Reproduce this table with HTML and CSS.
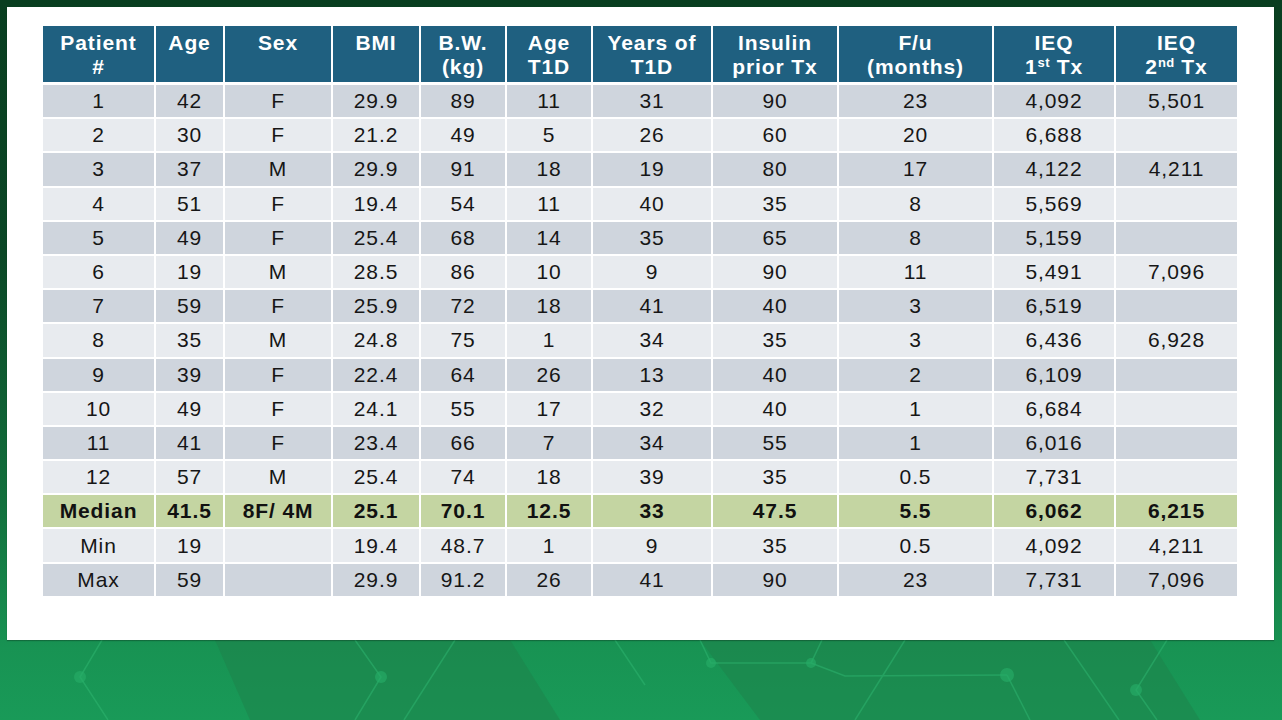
FILE: index.html
```html
<!DOCTYPE html>
<html lang="en">
<head>
<meta charset="utf-8">
<title>Patient table</title>
<link rel="stylesheet" href="styles.css">
</head>
<body>
<svg class="deco" width="1282" height="80" viewBox="0 640 1282 80" aria-hidden="true">
  <polygon class="band" points="215,640 510,640 560,720 250,720"/>
  <polygon class="band" points="700,640 1150,640 1200,720 760,720"/>
  <g class="net">
    <polyline points="102,640 80,677 108,720"/>
    <polyline points="355,640 381,677 355,720"/>
    <line x1="455" y1="640" x2="404" y2="720"/>
    <line x1="615" y1="640" x2="645" y2="685"/>
    <polyline points="700,640 711,663 811,663 822,640"/>
    <polyline points="811,663 845,676 1007,675"/>
    <line x1="905" y1="640" x2="855" y2="720"/>
    <line x1="1007" y1="675" x2="1030" y2="720"/>
    <line x1="1064" y1="640" x2="1119" y2="720"/>
    <polyline points="1167,640 1136,690 1157,720"/>
  </g>
  <g class="dots">
    <circle cx="80" cy="677" r="6"/>
    <circle cx="381" cy="677" r="6"/>
    <circle cx="711" cy="663" r="5"/>
    <circle cx="811" cy="663" r="5"/>
    <circle cx="1007" cy="675" r="7"/>
    <circle cx="1136" cy="690" r="6"/>
  </g>
</svg>
<main class="panel">
  <table class="data">
    <colgroup>
      <col style="width:113px"><col style="width:69px"><col style="width:108px"><col style="width:88px"><col style="width:86px"><col style="width:86px"><col style="width:120px"><col style="width:126px"><col style="width:155px"><col style="width:122px"><col style="width:123px">
    </colgroup>
    <thead>
      <tr>
        <th>Patient<br>#</th>
        <th>Age</th>
        <th>Sex</th>
        <th>BMI</th>
        <th>B.W.<br>(kg)</th>
        <th>Age<br>T1D</th>
        <th>Years of<br>T1D</th>
        <th>Insulin<br>prior Tx</th>
        <th>F/u<br>(months)</th>
        <th>IEQ<br>1<sup>st</sup> Tx</th>
        <th>IEQ<br>2<sup>nd</sup> Tx</th>
      </tr>
    </thead>
    <tbody>
      <tr class="odd"><td>1</td><td>42</td><td>F</td><td>29.9</td><td>89</td><td>11</td><td>31</td><td>90</td><td>23</td><td>4,092</td><td>5,501</td></tr>
      <tr class="even"><td>2</td><td>30</td><td>F</td><td>21.2</td><td>49</td><td>5</td><td>26</td><td>60</td><td>20</td><td>6,688</td><td></td></tr>
      <tr class="odd"><td>3</td><td>37</td><td>M</td><td>29.9</td><td>91</td><td>18</td><td>19</td><td>80</td><td>17</td><td>4,122</td><td>4,211</td></tr>
      <tr class="even"><td>4</td><td>51</td><td>F</td><td>19.4</td><td>54</td><td>11</td><td>40</td><td>35</td><td>8</td><td>5,569</td><td></td></tr>
      <tr class="odd"><td>5</td><td>49</td><td>F</td><td>25.4</td><td>68</td><td>14</td><td>35</td><td>65</td><td>8</td><td>5,159</td><td></td></tr>
      <tr class="even"><td>6</td><td>19</td><td>M</td><td>28.5</td><td>86</td><td>10</td><td>9</td><td>90</td><td>11</td><td>5,491</td><td>7,096</td></tr>
      <tr class="odd"><td>7</td><td>59</td><td>F</td><td>25.9</td><td>72</td><td>18</td><td>41</td><td>40</td><td>3</td><td>6,519</td><td></td></tr>
      <tr class="even"><td>8</td><td>35</td><td>M</td><td>24.8</td><td>75</td><td>1</td><td>34</td><td>35</td><td>3</td><td>6,436</td><td>6,928</td></tr>
      <tr class="odd"><td>9</td><td>39</td><td>F</td><td>22.4</td><td>64</td><td>26</td><td>13</td><td>40</td><td>2</td><td>6,109</td><td></td></tr>
      <tr class="even"><td>10</td><td>49</td><td>F</td><td>24.1</td><td>55</td><td>17</td><td>32</td><td>40</td><td>1</td><td>6,684</td><td></td></tr>
      <tr class="odd"><td>11</td><td>41</td><td>F</td><td>23.4</td><td>66</td><td>7</td><td>34</td><td>55</td><td>1</td><td>6,016</td><td></td></tr>
      <tr class="even"><td>12</td><td>57</td><td>M</td><td>25.4</td><td>74</td><td>18</td><td>39</td><td>35</td><td>0.5</td><td>7,731</td><td></td></tr>
      <tr class="median"><td>Median</td><td>41.5</td><td>8F/ 4M</td><td>25.1</td><td>70.1</td><td>12.5</td><td>33</td><td>47.5</td><td>5.5</td><td>6,062</td><td>6,215</td></tr>
      <tr class="even"><td>Min</td><td>19</td><td></td><td>19.4</td><td>48.7</td><td>1</td><td>9</td><td>35</td><td>0.5</td><td>4,092</td><td>4,211</td></tr>
      <tr class="odd"><td>Max</td><td>59</td><td></td><td>29.9</td><td>91.2</td><td>26</td><td>41</td><td>90</td><td>23</td><td>7,731</td><td>7,096</td></tr>
    </tbody>
  </table>
</main>
</body>
</html>
```

FILE: styles.css
```css
html, body {
  margin: 0;
  padding: 0;
}

body {
  width: 1282px;
  height: 720px;
  overflow: hidden;
  position: relative;
  background: linear-gradient(180deg, #093e20 0%, #0b4726 35%, #12703d 70%, #189353 90%, #199a58 100%);
  font-family: "Liberation Sans", Arial, sans-serif;
}

.deco {
  position: absolute;
  left: 0;
  top: 640px;
  display: block;
}

.deco .band {
  fill: #1f7e49;
  opacity: 0.45;
}

.deco .net {
  fill: none;
  stroke: #2fb872;
  stroke-width: 1.5;
  opacity: 0.5;
}

.deco .dots circle {
  fill: #26ac67;
  opacity: 0.65;
}

.panel {
  position: relative;
  box-sizing: border-box;
  width: 1267px;
  height: 633px;
  margin: 7px 0 0 7px;
  padding: 17px 0 0 34px;
  background: #ffffff;
  box-shadow: 0 1px 1px rgba(0, 0, 0, 0.25);
}

.data {
  border-collapse: collapse;
  table-layout: fixed;
  width: 1198px;
  font-size: 21px;
  letter-spacing: 0.9px;
  color: #161616;
}

.data th,
.data td {
  border: 2px solid #ffffff;
  padding: 0;
  text-align: center;
}

.data th {
  height: 51px;
  padding-top: 5px;
  border-bottom-width: 3px;
  background: #1f6080;
  color: #ffffff;
  font-weight: bold;
  line-height: 24px;
  vertical-align: top;
}

.data sup {
  font-size: 13px;
  line-height: 0;
  vertical-align: 7px;
  letter-spacing: 0.4px;
}

.data td {
  height: 32.2px;
  line-height: 32px;
}

.odd td {
  background: #cfd5dd;
}

.even td {
  background: #e8ebef;
}

.median td {
  background: #c4d5a2;
  font-weight: bold;
  color: #111111;
}
```
